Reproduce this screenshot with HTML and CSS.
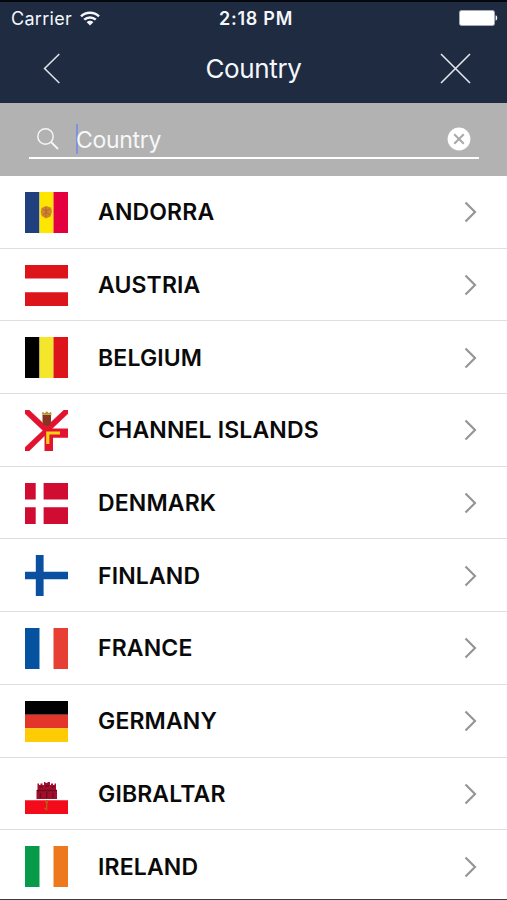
FILE: index.html
```html
<!DOCTYPE html>
<html lang="en">
<head>
    <meta charset="UTF-8">
    <meta name="viewport" content="width=device-width, initial-scale=1.0">
    <title>Country</title>
    <link rel="stylesheet" href="styles.css">
</head>
<body>
    <div class="screen">
        <header class="header">
            <div class="status">
                <div class="carrier">
                    <span>Carrier</span>
                    <svg width="20" height="15" viewBox="0 0 20 15">
                        <g fill="none" stroke="#f4f7fb" stroke-width="2.5">
                            <path d="M1 5.3C6 .5 14 .5 19 5.3"/>
                            <path d="M4.2 8.7C7.5 5.6 12.5 5.6 15.8 8.7"/>
                        </g>
                        <path d="M6.7 11.2C8.5 9.4 11.5 9.4 13.3 11.2L10 14.6z" fill="#f4f7fb"/>
                    </svg>
                </div>
                <span class="time">2:18 PM</span>
                <svg class="battery" width="39" height="16" viewBox="0 0 39 16">
                    <rect x=".5" y=".5" width="35" height="15" rx="2" fill="#fff" stroke="#a5acb7"/>
                    <path d="M36.6 5.3c2.2.5 2.2 4.9 0 5.4z" fill="#fff"/>
                </svg>
            </div>
            <nav class="nav">
                <svg width="18" height="31" viewBox="0 0 18 31"><path d="M16.3 1L1.6 15.5L16.3 30" fill="none" stroke="#dce1e8" stroke-width="1.6"/></svg>
                <h1>Country</h1>
                <svg width="31" height="31" viewBox="0 0 31 31"><path d="M1 1L30 30M30 1L1 30" fill="none" stroke="#e3e7ed" stroke-width="1.6"/></svg>
            </nav>
        </header>

        <div class="search">
            <div class="field">
                <svg class="lens" width="22" height="22" viewBox="0 0 22 22">
                    <circle cx="8.5" cy="8.5" r="7.7" fill="none" stroke="#f5f5f5" stroke-width="1.5"/>
                    <path d="M14 14L21 21" stroke="#f5f5f5" stroke-width="2"/>
                </svg>
                <span class="caret"></span>
                <span class="placeholder">Country</span>
                <svg width="24" height="24" viewBox="0 0 24 24">
                    <circle cx="12" cy="12" r="11.4" fill="#fff"/>
                    <path d="M7.2 7.2L16.8 16.8M16.8 7.2L7.2 16.8" stroke="#a9a9a9" stroke-width="2"/>
                </svg>
            </div>
        </div>

        <ul class="list">
            <li class="row">
                <svg class="flag" viewBox="0 0 43 41">
                    <path d="M0 0h14.5v41H0z" fill="#1f3f7f"/>
                    <path d="M14.5 0h14v41h-14z" fill="#ffe600"/>
                    <path d="M28.5 0H43v41H28.5z" fill="#e4003f"/>
                    <path d="M16.5 16l4.5-2 5 1.5 1 4-1.5 5-4.5 2-4.2-2.5-1-4z" fill="#d0862c"/>
                    <path d="M18 17l3 2 4-2M18 23l3-3 4 3M21 15v10" fill="none" stroke="#b8662a"/>
                </svg>
                <span class="name">ANDORRA</span>
                <svg class="arrow" viewBox="0 0 13 22"><path d="M1.5 1.5L11 11L1.5 20.5"/></svg>
            </li>
            <li class="row">
                <svg class="flag" viewBox="0 0 43 41"><path d="M0 0h43v13.5H0zM0 27.3h43V41H0z" fill="#dd151b"/></svg>
                <span class="name">AUSTRIA</span>
                <svg class="arrow" viewBox="0 0 13 22"><path d="M1.5 1.5L11 11L1.5 20.5"/></svg>
            </li>
            <li class="row">
                <svg class="flag" viewBox="0 0 43 41">
                    <path d="M0 0h14.5v41H0z" fill="#000"/>
                    <path d="M14.5 0h14v41h-14z" fill="#f4e62b"/>
                    <path d="M28.5 0H43v41H28.5z" fill="#dd151b"/>
                </svg>
                <span class="name">BELGIUM</span>
                <svg class="arrow" viewBox="0 0 13 22"><path d="M1.5 1.5L11 11L1.5 20.5"/></svg>
            </li>
            <li class="row">
                <svg class="flag" viewBox="0 0 43 41">
                    <path d="M0 0h4L21.5 16.5L39 0h4v3.5L25 20.5L4 41H0v-3.5L18 20.5L0 3.5z" fill="#e3132f" stroke="#e3132f" stroke-width=".6"/>
                    <path d="M19.5 18.5H43v9.3H28V41h-8.5z" fill="#e3132f"/>
                    <path d="M22.8 34V23H35" fill="none" stroke="#f9cf16" stroke-width="3.2"/>
                    <path d="M17.5 5h8.5v6q0 4-4.2 5.5Q17.5 15 17.5 11z" fill="#7b3a20"/>
                    <path d="M17 4.7l.5-3 2.3 1.5 2-2 2 2 2.3-1.5.4 3z" fill="#b58d2e"/>
                    <path d="M19.5 7h5M19.5 10h5M20.5 13h3" stroke="#b02525"/>
                </svg>
                <span class="name">CHANNEL ISLANDS</span>
                <svg class="arrow" viewBox="0 0 13 22"><path d="M1.5 1.5L11 11L1.5 20.5"/></svg>
            </li>
            <li class="row">
                <svg class="flag" viewBox="0 0 43 41"><path d="M0 0h10.7v16.5H0zM18.6 0H43v16.5H18.6zM0 24.3h10.7V41H0zM18.6 24.3H43V41H18.6z" fill="#d00c33"/></svg>
                <span class="name">DENMARK</span>
                <svg class="arrow" viewBox="0 0 13 22"><path d="M1.5 1.5L11 11L1.5 20.5"/></svg>
            </li>
            <li class="row">
                <svg class="flag" viewBox="0 0 43 41"><path d="M10.8 0h7.8v16.7H43v7.6H18.6V41h-7.8V24.3H0v-7.6h10.8z" fill="#0b50a0"/></svg>
                <span class="name">FINLAND</span>
                <svg class="arrow" viewBox="0 0 13 22"><path d="M1.5 1.5L11 11L1.5 20.5"/></svg>
            </li>
            <li class="row">
                <svg class="flag" viewBox="0 0 43 41">
                    <path d="M0 0h14.5v41H0z" fill="#0553a0"/>
                    <path d="M28.5 0H43v41H28.5z" fill="#e73f34"/>
                </svg>
                <span class="name">FRANCE</span>
                <svg class="arrow" viewBox="0 0 13 22"><path d="M1.5 1.5L11 11L1.5 20.5"/></svg>
            </li>
            <li class="row">
                <svg class="flag" viewBox="0 0 43 41">
                    <path d="M0 0h43v13.7H0z" fill="#000"/>
                    <path d="M0 13.7h43v13.6H0z" fill="#e4352b"/>
                    <path d="M0 27.3h43V41H0z" fill="#ffcb05"/>
                </svg>
                <span class="name">GERMANY</span>
                <svg class="arrow" viewBox="0 0 13 22"><path d="M1.5 1.5L11 11L1.5 20.5"/></svg>
            </li>
            <li class="row">
                <svg class="flag" viewBox="0 0 43 41">
                    <path d="M0 27.3h43V41H0z" fill="#f30b1c"/>
                    <path d="M11.5 26V17h1v-6.5h1.5v1.5h1.5v-1.5h2v1.5H19V9h1.5v1h2V9H25v3h1v-1.5h2v1.5h1.5v-1.5H31V17h1v9z" fill="#a10e2b"/>
                    <path d="M12 17.5h20M14.5 14h3M20 13h4M26.5 14h3M15.5 20v5M21.7 19v6M28 20v5" stroke="#6d0a20" stroke-width="1.3"/>
                    <path d="M21.7 27v10.5M21.7 35.5h-2.5M20 29h3" fill="none" stroke="#b45f17" stroke-width="1.4"/>
                </svg>
                <span class="name">GIBRALTAR</span>
                <svg class="arrow" viewBox="0 0 13 22"><path d="M1.5 1.5L11 11L1.5 20.5"/></svg>
            </li>
            <li class="row">
                <svg class="flag" viewBox="0 0 43 41">
                    <path d="M0 0h14.5v41H0z" fill="#079a48"/>
                    <path d="M28.5 0H43v41H28.5z" fill="#ed781d"/>
                </svg>
                <span class="name">IRELAND</span>
                <svg class="arrow" viewBox="0 0 13 22"><path d="M1.5 1.5L11 11L1.5 20.5"/></svg>
            </li>
        </ul>
    </div>
</body>
</html>
```
FILE: styles.css
```css
* {
    box-sizing: border-box;
}
body {
    margin: 0;
    background-color: #ffffff;
    font-family: Inter, "Liberation Sans", sans-serif;
}
svg {
    display: block;
    flex: none;
}
.screen {
    height: 900px;
    overflow: hidden;
    border-bottom: 1px solid #3c3c3c;
}
.header {
    height: 103px;
    border-top: 2px solid #05070f;
    background-color: #1f2b41;
    color: #f4f7fb;
}
.status {
    display: grid;
    grid-template-columns: 1fr auto 1fr;
    align-items: center;
    height: 32px;
    padding: 0 9px 0 11px;
    font-size: 18px;
}
.carrier {
    display: flex;
    align-items: center;
    gap: 8px;
    letter-spacing: 0.3px;
}
.time {
    padding-left: 3px;
    font-weight: 600;
    letter-spacing: 0.75px;
}
.battery {
    justify-self: end;
}
.nav {
    display: flex;
    justify-content: space-between;
    align-items: center;
    height: 68px;
    padding: 0 36px 0 43px;
}
.nav h1 {
    margin: 0 0 0 6px;
    font-size: 26px;
    font-weight: 400;
    letter-spacing: -0.35px;
}
.search {
    height: 73px;
    padding: 18px 28px 0 29px;
    background-color: #b2b2b2;
}
.field {
    display: flex;
    align-items: center;
    height: 38px;
    padding: 0 8px 0 8px;
    border-bottom: 2px solid #ffffff;
    color: #f7f7f7;
}
.caret {
    width: 2px;
    height: 30px;
    margin-left: 17px;
    background-color: #8590d8;
}
.placeholder {
    flex: 1;
    margin-left: -2px;
    padding-top: 1px;
    font-size: 23px;
    letter-spacing: -0.3px;
}
.list {
    margin: 0;
    padding: 0;
    list-style: none;
}
.row {
    display: flex;
    align-items: center;
    height: 72.7px;
    padding: 1px 30px 0 25px;
    border-bottom: 1.5px solid #dedede;
}
.flag {
    width: 43px;
    height: 41px;
}
.name {
    flex: 1;
    margin-left: 30px;
    font-size: 23px;
    font-weight: 600;
    letter-spacing: 0.15px;
    color: #0a0a0a;
}
.arrow {
    width: 13px;
    height: 22px;
    fill: none;
    stroke: #969696;
    stroke-width: 2.2;
}
```
